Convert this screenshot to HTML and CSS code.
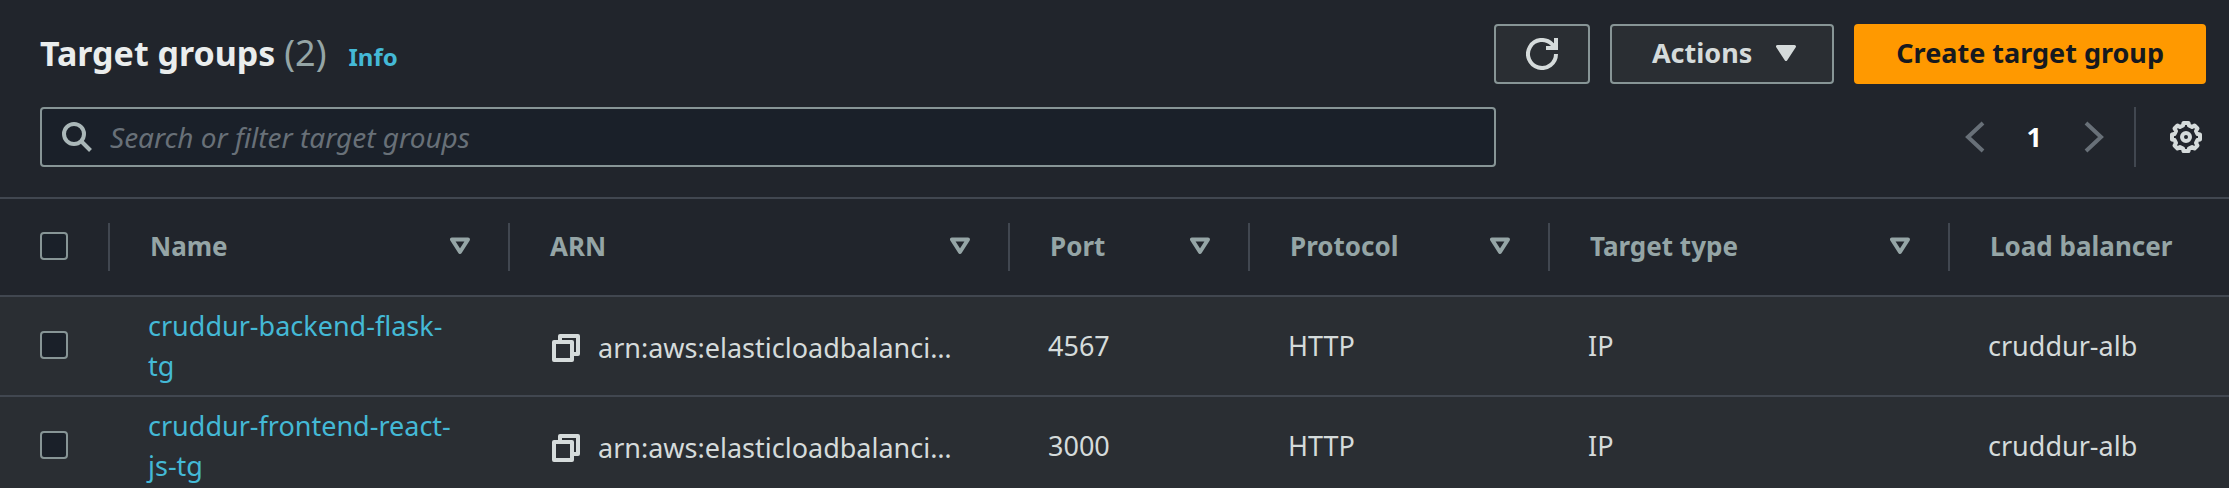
FILE: index.html
```html
<!DOCTYPE html>
<html lang="en">
<head>
<meta charset="utf-8">
<title>Target groups</title>
<link rel="stylesheet" href="styles.css">
</head>
<body>
<svg class="sprite" aria-hidden="true">
  <symbol id="sort" viewBox="0 0 20 18"><path d="M2 2.500h16L10 15z" fill="none" stroke="currentColor" stroke-width="4" stroke-linejoin="round"/></symbol>
  <symbol id="copy" viewBox="0 0 28 28"><path d="M2 8h18v18H2zM8 7V2h18v18h-5" fill="none" stroke="currentColor" stroke-width="4" stroke-linejoin="round"/></symbol>
</svg>
<main class="panel">
  <header class="header">
    <div class="title-row">
      <h1 class="title">Target groups <span class="count">(2)</span></h1>
      <a class="info" href="#">Info</a>
      <div class="actions">
        <button class="button button-icon" type="button" aria-label="Refresh">
          <svg width="32" height="32" viewBox="0 0 32 32"><path d="M30 16a14 14 0 1 1-4-9.800L30 10M30 0v10H20" fill="none" stroke="currentColor" stroke-width="4"/></svg>
        </button>
        <button class="button" type="button">Actions
          <svg class="caret" width="20" height="16" viewBox="0 0 20 16"><path d="M1.500 1.500h17L10 14.500z" fill="currentColor" stroke="currentColor" stroke-width="3" stroke-linejoin="round"/></svg>
        </button>
        <button class="button button-primary" type="button">Create target group</button>
      </div>
    </div>
    <div class="tools">
      <label class="search">
        <svg width="30" height="30" viewBox="0 0 30 30"><path d="M20 20l8.500 8.500" stroke="currentColor" stroke-width="4" fill="none"/><circle cx="12" cy="12" r="10" fill="none" stroke="currentColor" stroke-width="4"/></svg>
        <input class="search-input" type="text" placeholder="Search or filter target groups" aria-label="Search or filter target groups">
      </label>
      <nav class="pager" aria-label="Pagination">
        <button class="page-arrow" type="button" aria-label="Previous page"><svg width="20" height="32" viewBox="0 0 20 32"><path d="M18 2L3 16l15 14" fill="none" stroke="currentColor" stroke-width="4"/></svg></button>
        <button class="page" type="button">1</button>
        <button class="page-arrow" type="button" aria-label="Next page"><svg width="20" height="32" viewBox="0 0 20 32"><path d="M2 2l15 14L2 30" fill="none" stroke="currentColor" stroke-width="4"/></svg></button>
      </nav>
      <button class="settings" type="button" aria-label="Preferences">
        <svg width="32" height="32" viewBox="0 0 32 32" fill="none" stroke="currentColor" stroke-width="4" stroke-linejoin="round"><path d="M13.500 2h5l.5 2.500 3 1.500 2.500-1.500 3 3L26 10l1.500 3 2.500.5v5l-2.500.5-1.500 3 1.500 2.500-3 3L22 26l-3 1.500-.5 2.500h-5l-.5-2.500-3-1.500-2.500 1.500-3-3L6 22l-1.500-3-2.500-.5v-5l2.500-.5L6 10 4.500 7.500l3-3L10 6l3-1.500z"/><circle cx="16" cy="16" r="4"/></svg>
      </button>
    </div>
  </header>
  <table class="table">
    <colgroup><col class="col-check"><col class="col-name"><col class="col-arn"><col class="col-port"><col class="col-protocol"><col class="col-type"><col></colgroup>
    <thead>
      <tr>
        <th><div class="cell"><input class="check" type="checkbox" aria-label="Select all"></div></th>
        <th><div class="cell">Name<svg class="sort"><use href="#sort"/></svg></div></th>
        <th><div class="cell">ARN<svg class="sort"><use href="#sort"/></svg></div></th>
        <th><div class="cell">Port<svg class="sort"><use href="#sort"/></svg></div></th>
        <th><div class="cell">Protocol<svg class="sort"><use href="#sort"/></svg></div></th>
        <th><div class="cell">Target type<svg class="sort"><use href="#sort"/></svg></div></th>
        <th><div class="cell">Load balancer</div></th>
      </tr>
    </thead>
    <tbody>
      <tr>
        <td><input class="check" type="checkbox" aria-label="Select cruddur-backend-flask-tg"></td>
        <td class="name"><a class="link" href="#">cruddur-backend-flask-tg</a></td>
        <td><div class="arn"><button class="copy" type="button" aria-label="Copy ARN"><svg width="28" height="28"><use href="#copy"/></svg></button><span>arn:aws:elasticloadbalanci…</span></div></td>
        <td>4567</td><td>HTTP</td><td>IP</td><td>cruddur-alb</td>
      </tr>
      <tr>
        <td><input class="check" type="checkbox" aria-label="Select cruddur-frontend-react-js-tg"></td>
        <td class="name"><a class="link" href="#">cruddur-frontend-react-js-tg</a></td>
        <td><div class="arn"><button class="copy" type="button" aria-label="Copy ARN"><svg width="28" height="28"><use href="#copy"/></svg></button><span>arn:aws:elasticloadbalanci…</span></div></td>
        <td>3000</td><td>HTTP</td><td>IP</td><td>cruddur-alb</td>
      </tr>
    </tbody>
  </table>
</main>
</body>
</html>
```
FILE: styles.css
```css
* { box-sizing: border-box; }
html { background: #2a2e33; }
body {
  margin: 0;
  overflow: hidden;
  background: #2a2e33;
  color: #d5dbdb;
  font: 27px/40px "Noto Sans", "Open Sans", sans-serif;
}
svg { display: block; flex: none; }
button, input { font: inherit; color: inherit; margin: 0; }
button { background: none; border: 0; padding: 0; cursor: pointer; }
a { color: #44b9d6; text-decoration: none; }
.sprite { position: absolute; width: 0; height: 0; }

.header {
  display: grid;
  gap: 23px;
  padding: 24px 23px 30px 40px;
  background: #21252c;
  border-bottom: 2px solid #414750;
}
.title-row { display: flex; align-items: baseline; height: 60px; }
.title { margin: 0; font-size: 34px; line-height: 58px; font-weight: 700; color: #eaeded; }
.count { font-size: 36px; font-weight: 400; color: #95a5a6; }
.info { margin-left: 22px; font-size: 24px; font-weight: 700; }
.actions { display: flex; gap: 20px; margin-left: auto; align-self: center; }
.button {
  display: flex;
  align-items: center;
  height: 60px;
  padding: 0 36px 2px 40px;
  border: 2px solid #879596;
  border-radius: 4px;
  background: #2a2e33;
  font-weight: 700;
}
.button-icon { padding: 0 30px; }
.button-primary { padding: 0 40px 2px; border-color: #ff9900; background: #ff9900; color: #16191f; }
.caret { margin-left: 24px; }

.tools { display: flex; align-items: center; height: 60px; }
.search {
  display: flex;
  align-items: center;
  gap: 18px;
  flex: 0 1 1456px;
  height: 60px;
  padding: 0 20px;
  border: 2px solid #879596;
  border-radius: 4px;
  background: #1a2029;
  color: #aab7b8;
}
.search-input { flex: 1; min-width: 0; padding: 0; border: 0; outline: 0; background: none; font-size: 28px; }
.search-input::placeholder { color: #687078; font-style: italic; opacity: 1; }
.pager { display: flex; align-items: center; gap: 42px; margin-left: auto; padding-right: 30px; }
.page { font-weight: 700; color: #fff; }
.page-arrow { color: #687078; }
.settings { display: flex; align-items: center; height: 60px; padding: 0 4px 0 34px; border-left: 2px solid #414750; }

.table { width: 100%; table-layout: fixed; border-collapse: separate; border-spacing: 0; }
.col-check { width: 110px; }
.col-name, .col-type { width: 400px; }
.col-arn { width: 500px; }
.col-port { width: 240px; }
.col-protocol { width: 300px; }
th { height: 98px; padding: 0; background: #21252c; border-bottom: 2px solid #414750; text-align: left; font-size: 26px; color: #95a5a6; white-space: nowrap; }
.cell { display: flex; align-items: center; justify-content: space-between; height: 48px; padding: 0 38px 2px 40px; border-right: 2px solid #414750; }
th:last-child .cell { border-right: 0; }
.sort { width: 20px; height: 18px; }
td { height: 100px; padding: 9px 38px; border-bottom: 2px solid #414750; vertical-align: middle; }
td:first-child { padding: 8px 38px 10px 40px; }
.name { padding-right: 46px; }
.check {
  appearance: none;
  display: block;
  width: 28px;
  height: 28px;
  border: 2px solid #879596;
  border-radius: 4px;
  background: #1a2029;
}
.arn { display: flex; align-items: center; gap: 18px; padding: 4px 0 0 4px; white-space: nowrap; }
```
